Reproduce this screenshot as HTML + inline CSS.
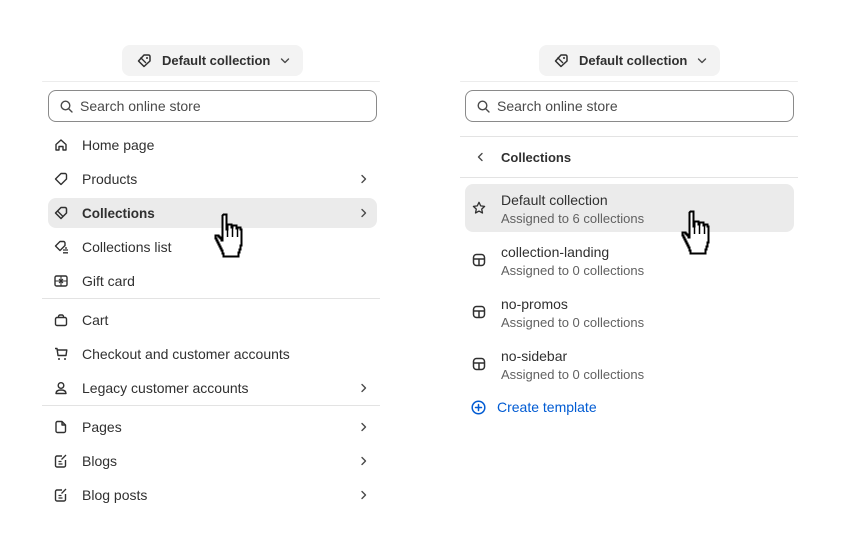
<!DOCTYPE html>
<html><head><meta charset="utf-8"><style>
*{box-sizing:border-box;margin:0;padding:0}
body{width:852px;height:557px;background:#fff;position:relative;overflow:hidden;font-family:"Liberation Sans",sans-serif;font-size:14px;color:#303030}
.a{position:absolute}
.pill{position:absolute;top:45px;height:31px;width:181px;background:#f3f3f3;border-radius:8px;font-weight:bold;font-size:13px;line-height:31px}
.topb{position:absolute;top:81px;height:1px;background:#ececec;width:338px;border-radius:6px}
.search{position:absolute;top:90px;height:32px;width:329px;border:1px solid #8a8a8a;border-radius:8px;line-height:31px;padding-left:31px;color:#4a4a4a}
.row{position:absolute;left:48px;width:329px;height:30px;line-height:31px;padding-left:34px;border-radius:8px}
.row svg.i{position:absolute;left:6px;top:8px}
.chev{position:absolute;right:8px;top:10px}
.div{position:absolute;height:1px;background:#e3e3e3}
.t{position:absolute;left:465px;width:329px;height:48px;border-radius:8px;padding-left:36px}
.t .n{position:absolute;top:8px;left:36px}
.t .s{position:absolute;top:27px;left:36px;color:#616161;font-size:13px}
.t svg{position:absolute;left:7px;top:17px}
</style></head><body>
<svg width="0" height="0" style="position:absolute"><defs>
<symbol id="ch" viewBox="0 0 10 10"><path d="M3 1.5 6.5 5 3 8.5" fill="none" stroke="#4a4a4a" stroke-width="1.4" stroke-linecap="round" stroke-linejoin="round"/></symbol>
<symbol id="tpl" viewBox="0 0 14 14"><rect x="1.5" y="1.5" width="11" height="11" rx="3" fill="none" stroke="#303030" stroke-width="1.5"/><path d="M1.5 6h11M7 6v6.5" stroke="#303030" stroke-width="1.5"/></symbol>
<symbol id="hand" viewBox="0 0 38 46"><path d="M10.5 1.5h3v15h1v-5h4v3h1v-2h4v3h1v-1h3v2h1v16h-1v4h-1v3h-1v4H10.5v-3h-1v-3h-1v-2h-1v-2h-1v-2h-1v-2h-1v-2h-1v-2h-1v-3h3v1h1v1h1v1h1v2h1V2.5z" fill="#fff" stroke="#000" stroke-width="2" stroke-linejoin="miter"/><path d="M14.5 16v8M19.5 14v10M24.5 15v9" stroke="#000" stroke-width="1.5"/></symbol>
</defs></svg>

<!-- LEFT -->
<div class="pill" style="left:122px"><svg class="a" style="left:14px;top:8px" width="16" height="15" viewBox="0 0 16 15"><path d="M8 2h4.5a1.5 1.5 0 0 1 1.5 1.5V8l-6 5.5L2.5 8z" fill="none" stroke="#303030" stroke-width="1.5" stroke-linejoin="round"/><path d="M4.5 4.5 10 10" stroke="#303030" stroke-width="1.3"/><circle cx="11" cy="5" r="1" fill="#303030"/></svg><span class="a" style="left:40px">Default collection</span><svg class="a" style="left:158px;top:11px" width="10" height="10"><use href="#ch" transform="rotate(90 5 5)"/></svg></div>
<div class="topb" style="left:42px"></div>
<div class="search" style="left:48px"><svg class="a" style="left:11px;top:9px" width="13" height="13" viewBox="0 0 13 13"><circle cx="5.5" cy="5.5" r="4.3" fill="none" stroke="#4a4a4a" stroke-width="1.4"/><path d="M8.7 8.7 12 12" stroke="#4a4a4a" stroke-width="1.4" stroke-linecap="round"/></svg>Search online store</div>

<div class="row" style="top:130px"><svg class="i" width="14" height="14" viewBox="0 0 14 14"><path d="M2 6.5 7 2l5 4.5V12H9V8.5H5V12H2z" fill="none" stroke="#303030" stroke-width="1.4" stroke-linejoin="round"/></svg>Home page</div>
<div class="row" style="top:164px"><svg class="i" width="14" height="14" viewBox="0 0 14 14"><path d="M7 1.5h4a1.5 1.5 0 0 1 1.5 1.5v4L7 12.5 1.5 7z" fill="none" stroke="#303030" stroke-width="1.4" stroke-linejoin="round"/></svg>Products<svg class="chev" width="10" height="10"><use href="#ch"/></svg></div>
<div class="row" style="top:198px;background:#ebebeb;font-weight:bold;font-size:13.5px"><svg class="i" width="15" height="14" viewBox="0 0 15 14"><path d="M7 1.5h4a1.5 1.5 0 0 1 1.5 1.5v4L7 12.5 1.5 7z" fill="none" stroke="#303030" stroke-width="1.5" stroke-linejoin="round"/><path d="M3.5 5 9 10.5" stroke="#303030" stroke-width="1.3"/></svg>Collections<svg class="chev" width="10" height="10"><use href="#ch"/></svg></div>
<div class="row" style="top:232px"><svg class="i" width="15" height="14" viewBox="0 0 15 14"><path d="M6 1.5h3.5a1.5 1.5 0 0 1 1.5 1.5v2.5L6 10.5 1.5 6z" fill="none" stroke="#303030" stroke-width="1.4" stroke-linejoin="round"/><path d="M9 10h5M9 12.8h5M12 7v2" stroke="#303030" stroke-width="1.3"/></svg>Collections list</div>
<div class="row" style="top:266px"><svg class="i" width="14" height="14" viewBox="0 0 14 14"><rect x="1" y="2" width="12" height="10" rx="1.5" fill="none" stroke="#303030" stroke-width="1.4"/><path d="M1 7h12M7 2v10M5 5l2 2 2-2M5 9l2-2 2 2" fill="none" stroke="#303030" stroke-width="1.1"/></svg>Gift card</div>
<div class="div" style="left:42px;top:298px;width:338px"></div>
<div class="row" style="top:305px"><svg class="i" width="14" height="14" viewBox="0 0 14 14"><rect x="1.5" y="4.5" width="11" height="8" rx="1.5" fill="none" stroke="#303030" stroke-width="1.4"/><path d="M4.5 4.5V3.5A1.5 1.5 0 0 1 6 2h2a1.5 1.5 0 0 1 1.5 1.5v1" fill="none" stroke="#303030" stroke-width="1.4"/></svg>Cart</div>
<div class="row" style="top:339px"><svg class="i" width="14" height="14" viewBox="0 0 14 14"><path d="M1 1.5h2l1 7h8l.8-5.5H3.5" fill="none" stroke="#303030" stroke-width="1.4" stroke-linejoin="round"/><circle cx="5" cy="12" r="1" fill="#303030"/><circle cx="11" cy="12" r="1" fill="#303030"/></svg>Checkout and customer accounts</div>
<div class="row" style="top:373px"><svg class="i" width="14" height="14" viewBox="0 0 14 14"><circle cx="7" cy="4.5" r="2.8" fill="none" stroke="#303030" stroke-width="1.4"/><path d="M2 12.5c0-2.5 2.2-3.5 5-3.5s5 1 5 3.5z" fill="none" stroke="#303030" stroke-width="1.4" stroke-linejoin="round"/></svg>Legacy customer accounts<svg class="chev" width="10" height="10"><use href="#ch"/></svg></div>
<div class="div" style="left:42px;top:405px;width:338px"></div>
<div class="row" style="top:412px"><svg class="i" width="14" height="14" viewBox="0 0 14 14"><path d="M3.5 1.5h4.5l3.5 3.5v6a1.5 1.5 0 0 1-1.5 1.5h-6.5A1.5 1.5 0 0 1 2 11V3a1.5 1.5 0 0 1 1.5-1.5zM8 1.5V5h3.5" fill="none" stroke="#303030" stroke-width="1.4" stroke-linejoin="round"/></svg>Pages<svg class="chev" width="10" height="10"><use href="#ch"/></svg></div>
<div class="row" style="top:446px"><svg class="i" width="14" height="14" viewBox="0 0 14 14"><path d="M8 2H3a1.5 1.5 0 0 0-1.5 1.5v8A1.5 1.5 0 0 0 3 13h7a1.5 1.5 0 0 0 1.5-1.5V6" fill="none" stroke="#303030" stroke-width="1.4"/><path d="M4.5 7.5h3M4.5 10h4M7.5 5.5 12 1" stroke="#303030" stroke-width="1.3"/></svg>Blogs<svg class="chev" width="10" height="10"><use href="#ch"/></svg></div>
<div class="row" style="top:480px"><svg class="i" width="14" height="14" viewBox="0 0 14 14"><path d="M8 2H3a1.5 1.5 0 0 0-1.5 1.5v8A1.5 1.5 0 0 0 3 13h7a1.5 1.5 0 0 0 1.5-1.5V6" fill="none" stroke="#303030" stroke-width="1.4"/><path d="M4.5 7.5h3M4.5 10h4M7.5 5.5 12 1" stroke="#303030" stroke-width="1.3"/></svg>Blog posts<svg class="chev" width="10" height="10"><use href="#ch"/></svg></div>
<svg class="a" style="left:213px;top:213px" width="38" height="46"><use href="#hand"/></svg>

<!-- RIGHT -->
<div class="pill" style="left:539px"><svg class="a" style="left:14px;top:8px" width="16" height="15" viewBox="0 0 16 15"><path d="M8 2h4.5a1.5 1.5 0 0 1 1.5 1.5V8l-6 5.5L2.5 8z" fill="none" stroke="#303030" stroke-width="1.5" stroke-linejoin="round"/><path d="M4.5 4.5 10 10" stroke="#303030" stroke-width="1.3"/><circle cx="11" cy="5" r="1" fill="#303030"/></svg><span class="a" style="left:40px">Default collection</span><svg class="a" style="left:158px;top:11px" width="10" height="10"><use href="#ch" transform="rotate(90 5 5)"/></svg></div>
<div class="topb" style="left:460px"></div>
<div class="search" style="left:465px"><svg class="a" style="left:11px;top:9px" width="13" height="13" viewBox="0 0 13 13"><circle cx="5.5" cy="5.5" r="4.3" fill="none" stroke="#4a4a4a" stroke-width="1.4"/><path d="M8.7 8.7 12 12" stroke="#4a4a4a" stroke-width="1.4" stroke-linecap="round"/></svg>Search online store</div>
<div class="div" style="left:460px;top:136px;width:338px"></div>
<svg class="a" style="left:475px;top:152px" width="10" height="10"><use href="#ch" transform="rotate(180 5 5)"/></svg>
<div class="a" style="left:501px;top:150px;font-weight:bold;font-size:13px">Collections</div>
<div class="div" style="left:460px;top:177px;width:338px"></div>

<div class="t" style="top:184px;background:#ebebeb"><svg width="14" height="14" viewBox="0 0 14 14"><path d="M7 1.3l1.7 3.6 3.9.5-2.9 2.7.8 3.9L7 10.1 3.5 12l.8-3.9L1.4 5.4l3.9-.5z" fill="none" stroke="#303030" stroke-width="1.3" stroke-linejoin="round"/></svg><span class="n">Default collection</span><span class="s">Assigned to 6 collections</span></div>
<div class="t" style="top:236px"><svg width="14" height="14"><use href="#tpl"/></svg><span class="n">collection-landing</span><span class="s">Assigned to 0 collections</span></div>
<div class="t" style="top:288px"><svg width="14" height="14"><use href="#tpl"/></svg><span class="n">no-promos</span><span class="s">Assigned to 0 collections</span></div>
<div class="t" style="top:340px"><svg width="14" height="14"><use href="#tpl"/></svg><span class="n">no-sidebar</span><span class="s">Assigned to 0 collections</span></div>
<svg class="a" style="left:471px;top:400px" width="15" height="15" viewBox="0 0 15 15"><circle cx="7.5" cy="7.5" r="6.3" fill="none" stroke="#005bd3" stroke-width="1.5"/><path d="M7.5 4.5v6M4.5 7.5h6" stroke="#005bd3" stroke-width="1.5" stroke-linecap="round"/></svg>
<div class="a" style="left:497px;top:399px;color:#005bd3">Create template</div>
<svg class="a" style="left:680px;top:210px" width="38" height="46"><use href="#hand"/></svg>
</body></html>
